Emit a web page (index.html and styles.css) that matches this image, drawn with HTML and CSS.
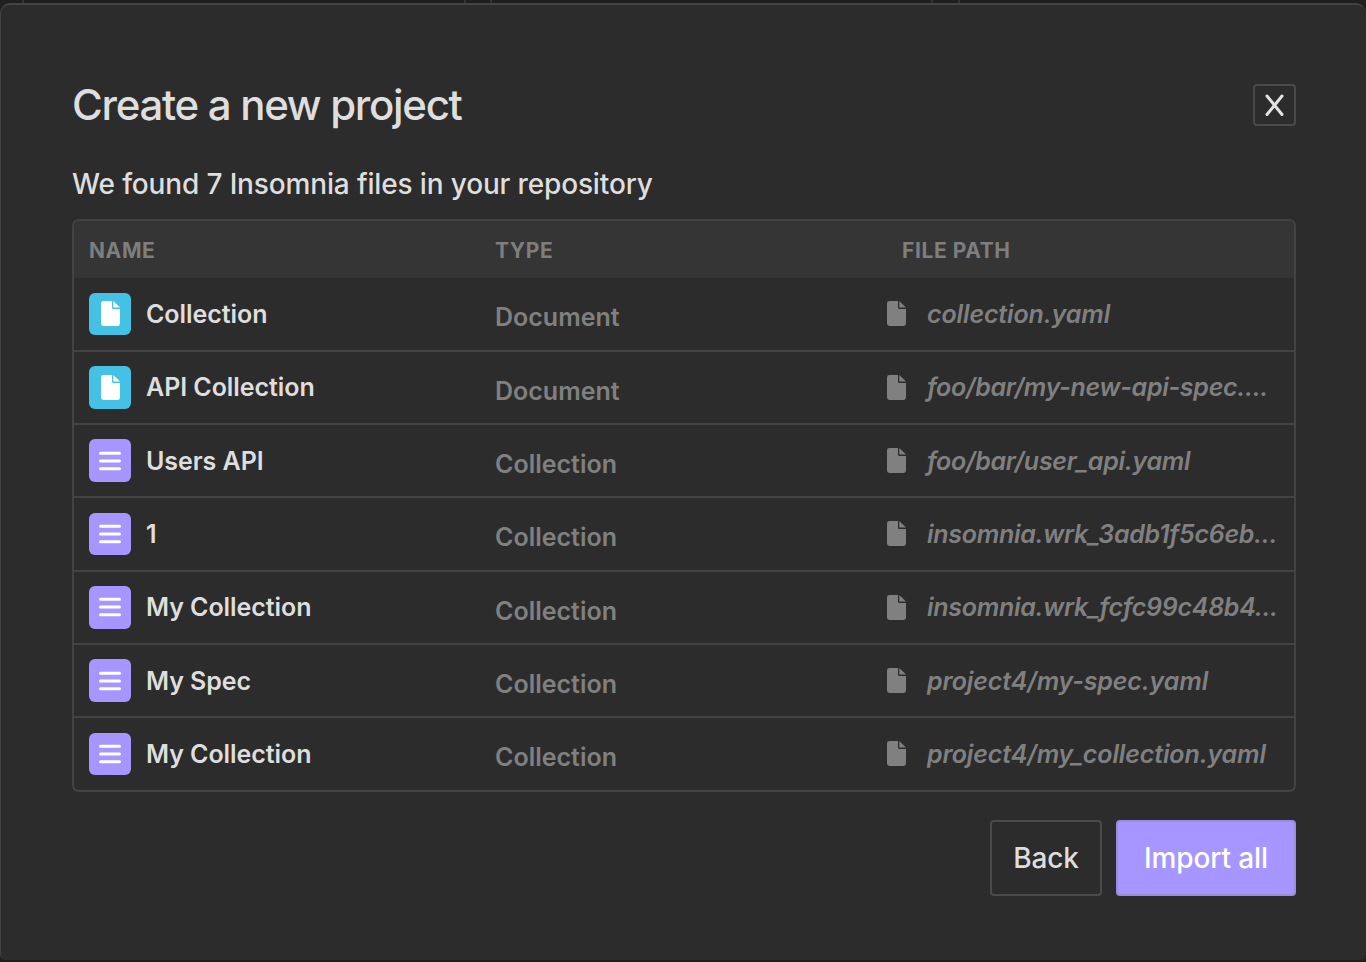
FILE: index.html
```html
<!DOCTYPE html>
<html lang="en">
<head>
<meta charset="utf-8">
<title>Create a new project</title>
<link rel="stylesheet" href="styles.css">
</head>
<body>
<svg class="defs" width="0" height="0" aria-hidden="true">
  <symbol id="file" viewBox="0 0 19 25"><path fill="currentColor" d="M11 0V6.500Q11 8 12.500 8H19V22.600Q19 25 16.600 25H2.400Q0 25 0 22.600V2.400Q0 0 2.400 0ZM12.300 0L19 6.600H12.300Z"/></symbol>
  <symbol id="bars" viewBox="0 0 22 20"><path fill="none" stroke="currentColor" stroke-width="3" stroke-linecap="round" d="M1.500 2.300H20.500M1.500 10H20.500M1.500 17.800H20.500"/></symbol>
</svg>
<div class="backdrop"><i></i><i></i><i></i></div>
<main class="modal">
  <header class="head">
    <h1 class="title">Create a new project</h1>
    <button class="close" aria-label="Close"><svg width="20" height="24" viewBox="0 0 20 24"><path d="M2 3L17 21.500M17 3L2 21.500"/></svg></button>
  </header>
  <p class="lead"><span>We found 7 Insomnia files in your repository</span></p>
  <section class="table">
    <div class="row thead"><span>NAME</span><span>TYPE</span><span class="th-path">FILE PATH</span></div>
    <div class="row"><div class="name"><b class="tile doc"><svg><use href="#file"/></svg></b><span>Collection</span></div><div class="type">Document</div><div class="path"><svg><use href="#file"/></svg><em>collection.yaml</em></div></div>
    <div class="row"><div class="name"><b class="tile doc"><svg><use href="#file"/></svg></b><span>API Collection</span></div><div class="type">Document</div><div class="path tight"><svg><use href="#file"/></svg><em>foo/bar/my-new-api-spec....</em></div></div>
    <div class="row"><div class="name"><b class="tile"><svg><use href="#bars"/></svg></b><span>Users API</span></div><div class="type">Collection</div><div class="path tight"><svg><use href="#file"/></svg><em>foo/bar/user_api.yaml</em></div></div>
    <div class="row"><div class="name"><b class="tile"><svg><use href="#bars"/></svg></b><span>1</span></div><div class="type">Collection</div><div class="path tight"><svg><use href="#file"/></svg><em>insomnia.wrk_3adb1f5c6eb...</em></div></div>
    <div class="row"><div class="name"><b class="tile"><svg><use href="#bars"/></svg></b><span>My Collection</span></div><div class="type">Collection</div><div class="path tight"><svg><use href="#file"/></svg><em>insomnia.wrk_fcfc99c48b4...</em></div></div>
    <div class="row"><div class="name"><b class="tile"><svg><use href="#bars"/></svg></b><span>My Spec</span></div><div class="type">Collection</div><div class="path"><svg><use href="#file"/></svg><em>project4/my-spec.yaml</em></div></div>
    <div class="row"><div class="name"><b class="tile"><svg><use href="#bars"/></svg></b><span>My Collection</span></div><div class="type">Collection</div><div class="path"><svg><use href="#file"/></svg><em>project4/my_collection.yaml</em></div></div>
  </section>
  <footer class="actions"><button class="btn back">Back</button><button class="btn primary">Import all</button></footer>
</main>
</body>
</html>
```
FILE: styles.css
```css
* { box-sizing: border-box; }
body { margin: 0; height: 962px; overflow: hidden; background: #1f1f1f; color: #dedede; font-family: Inter, "Liberation Sans", sans-serif; display: flex; flex-direction: column; }
.defs { position: absolute; }
.backdrop { height: 3px; display: flex; padding-left: 22px; }
.backdrop i { flex: none; border: solid #343434; border-width: 0 2px; height: 3px; }
.backdrop i:nth-child(1) { width: 444px; margin-right: 24px; }
.backdrop i:nth-child(2) { width: 443px; margin-right: 25px; }
.backdrop i:nth-child(3) { width: 444px; }
.modal { height: 957px; border: 2px solid #434343; border-left-width: 1px; border-right-width: 0; border-bottom-width: 0; border-radius: 10px 10px 6px 6px; background: #2c2c2c; padding: 79px 70px 0 71px; }
.head { display: flex; justify-content: space-between; align-items: center; height: 42px; }
.title { margin: 0; font-size: 42px; line-height: 42px; font-weight: 450; letter-spacing: -1.31px; white-space: nowrap; }
.close { width: 43px; height: 42px; padding: 0; border: 2px solid #4a4a4a; border-radius: 4px; background: none; display: flex; align-items: center; justify-content: center; }
.close path { stroke: #e2e2e2; stroke-width: 3; stroke-linecap: round; }
.lead { margin: 41px 0 0; height: 52px; font-size: 28px; line-height: 34px; font-weight: 450; letter-spacing: -0.15px; white-space: nowrap; }
.table { height: 573px; border: 2px solid #434343; border-radius: 7px; overflow: hidden; }
.row { height: 73.33px; display: grid; grid-template-columns: 406px 406px 1fr; padding-left: 15px; align-items: center; border-bottom: 2px solid #434343; font-size: 25px; line-height: 32px; font-weight: 570; white-space: nowrap; }
.row:last-child { border-bottom-color: transparent; }
.thead { height: 57.33px; background: #353535; border: 0; color: #7e7e7e; font-size: 21px; font-weight: 650; letter-spacing: 0.6px; padding-top: 2px; }
.th-path { padding-left: 1px; }
.name { display: flex; align-items: center; gap: 15px; letter-spacing: -0.06px; }
.tile { width: 42px; height: 42.67px; border-radius: 6px; background: #a796ff; color: #fff; display: flex; align-items: center; justify-content: center; }
.tile svg { width: 22px; height: 20px; }
.tile.doc { background: #46c1e6; }
.tile.doc svg, .path svg { width: 19px; height: 25px; }
.type { color: #808080; padding-top: 6.4px; }
.path { display: flex; align-items: center; color: #808080; gap: 21px; margin-left: -14px; letter-spacing: -0.12px; }
.path.tight { letter-spacing: -0.28px; }
.actions { display: flex; justify-content: flex-end; gap: 14px; margin-top: 28px; }
.btn { height: 76px; padding: 0; border: 2px solid #4a4a4a; border-radius: 4px; background: none; color: #dedede; font: 450 28px/34px Inter, sans-serif; letter-spacing: -0.1px; }
.back { width: 112px; }
.primary { width: 180px; background: #a796ff; border-color: #9c8ddb; color: #fff; }
```
